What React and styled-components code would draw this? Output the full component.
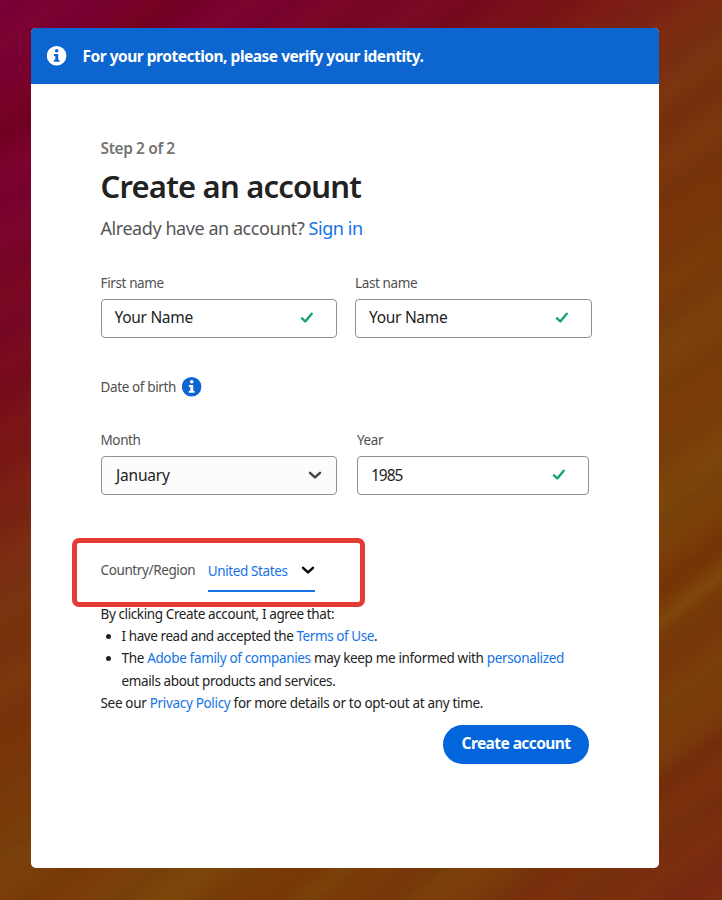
import styled, { createGlobalStyle } from 'styled-components'

export default function App() {
    return <Page>
        <GlobalStyle />
        <Streaks />
        <Card>
            <Banner>
                <InfoIcon fill="#FFFFFF" glyph="#0D66D0" />
                <BannerText>For your protection, please verify your identity.</BannerText>
            </Banner>
            <Content>
                <Step>Step 2 of 2</Step>
                <Title>Create an account</Title>
                <Subtitle>Already have an account? <Link href="#">Sign in</Link></Subtitle>
                <Fields $columns="236.5px 237px" $gap="18px">
                    <TextField label="First name" value="Your Name" spacing="-0.3px" />
                    <TextField label="Last name" value="Your Name" spacing="-0.3px" />
                </Fields>
                <BirthRow>
                    <Label>Date of birth</Label>
                    <InfoIcon fill="#0D66D0" glyph="#FFFFFF" />
                </BirthRow>
                <Fields $columns="236.5px 232px" $gap="20px">
                    <Field>
                        <Label>Month</Label>
                        <Select type="button">January <Chevron color="#444444" /></Select>
                    </Field>
                    <TextField label="Year" value="1985" spacing="-1px" lift="0px" />
                </Fields>
                <CountryRow>
                    <Label>Country/Region</Label>
                    <Country>
                        United States
                        <Chevron color="#000000" />
                    </Country>
                    <Highlight />
                </CountryRow>
                <Terms>
                    <Line $spacing="-0.39px">By clicking Create account, I agree that:</Line>
                    <List>
                        <li><Line $spacing="-0.42px">I have read and accepted the <Link href="#">Terms of Use</Link>.</Line></li>
                        <li>
                            <Line $spacing="-0.34px">The <Link href="#">Adobe family of companies</Link> may keep me informed with <Link href="#">personalized</Link></Line>
                            <Line $spacing="-0.38px">emails about products and services.</Line>
                        </li>
                    </List>
                    <Line $spacing="-0.32px">See our <Link href="#">Privacy Policy</Link> for more details or to opt-out at any time.</Line>
                </Terms>
                <Submit type="button">Create account</Submit>
            </Content>
        </Card>
    </Page>;
}

function TextField({ label, value, spacing, lift = '1px' }) {
    return <Field>
        <Label>{label}</Label>
        <InputBox>
            <Input defaultValue={value} aria-label={label} $spacing={spacing} $lift={lift} />
            <Check />
        </InputBox>
    </Field>;
}

function InfoIcon({ fill, glyph }) {
    return <Icon width="20" height="20" viewBox="0 0 20 20">
        <circle cx="9.6" cy="9.8" r="9.8" fill={fill} />
        <circle cx="9.7" cy="4.8" r="1.8" fill={glyph} />
        <path d="M6.9 8h4.3v5.8h1.3v1.9H6.9v-1.9h1.4V9.9H6.9z" fill={glyph} />
    </Icon>;
}

function Check() {
    return <Icon width="14" height="12" viewBox="0 0 14 12">
        <path d="M2 6.3l3.3 3.2 6.4-7.8" fill="none" stroke="#12A472" strokeWidth="2.4" strokeLinecap="round" strokeLinejoin="round" />
    </Icon>;
}

function Chevron({ color }) {
    return <Icon width="14" height="9" viewBox="0 0 14 9">
        <path d="M2 1.8l5 4.6 5-4.6" fill="none" stroke={color} strokeWidth="2.4" strokeLinecap="round" strokeLinejoin="round" />
    </Icon>;
}

const GlobalStyle = createGlobalStyle`
    * {
        box-sizing: border-box;
    }
    body {
        margin: 0;
        font-family: "Noto Sans", "Open Sans", sans-serif;
    }
`;
const Page = styled.div`
    position: relative;
    width: 722px;
    height: 900px;
    padding: 28px 63px 32px 31px;
    overflow: hidden;
    background: linear-gradient(142deg,
        #7A0036 0px, #78002F 70px, #720020 105px, #7A0030 140px, #78062A 240px,
        #760A1C 300px, #7A1814 370px, #7A2A12 440px, #7A3810 500px, #783208 590px,
        #7A420C 660px, #783A08 740px, #7A450A 810px, #763606 870px, #7A400A 960px,
        #78300C 1050px, #7A2812 1154px);
`;
const Streaks = styled.div`
    position: absolute;
    inset: 0;
    background:
        repeating-linear-gradient(145deg, transparent 0px, #00000008 11px, transparent 19px, #FF800006 37px, transparent 53px),
        linear-gradient(142deg,
            transparent 190px, #76060844 235px, transparent 260px, transparent 480px,
            #70180044 500px, transparent 540px, transparent 625px, #6A200044 650px, transparent 680px,
            transparent 880px, #84560C66 898px, transparent 908px, #74280A66 940px, transparent 965px,
            transparent 1010px, #70200A66 1030px, transparent 1050px);
`;
const Card = styled.div`
    position: relative;
    width: 628px;
    height: 840px;
    border-radius: 5px;
    background: #FFFFFF;
    overflow: hidden;
`;
const Banner = styled.div`
    display: flex;
    align-items: center;
    gap: 16px;
    height: 56px;
    padding: 0 0 1px 15.5px;
    background: #0D66D0;
`;
const BannerText = styled.div`
    padding-top: 1px;
    font-size: 15.5px;
    font-weight: 700;
    letter-spacing: -0.49px;
    color: #FFFFFF;
`;
const Content = styled.div`
    display: flex;
    flex-direction: column;
    padding: 54px 67px 0 69.5px;
`;
const Step = styled.div`
    font-size: 15.5px;
    font-weight: 600;
    line-height: 20px;
    letter-spacing: -0.4px;
    color: #747474;
`;
const Title = styled.h1`
    margin: 8px 0 10px;
    font-size: 31px;
    font-weight: 600;
    line-height: 40px;
    letter-spacing: -0.8px;
    color: #222222;
`;
const Subtitle = styled.div`
    margin-bottom: 33px;
    font-size: 18px;
    line-height: 24px;
    letter-spacing: -0.44px;
    color: #555555;
`;
const Link = styled.a`
    color: #1473E6;
    text-decoration: none;
`;
const Fields = styled.div`
    display: grid;
    grid-template-columns: ${props => props.$columns};
    column-gap: ${props => props.$gap};
`;
const Field = styled.div`
    display: flex;
    flex-direction: column;
    gap: 6px;
`;
const Label = styled.div`
    font-size: 13.5px;
    line-height: 20px;
    letter-spacing: -0.38px;
    color: #505050;
`;
const InputBox = styled.div`
    display: flex;
    align-items: center;
    height: 39px;
    padding: 0 22px 2px 13px;
    border: 1px solid #909090;
    border-radius: 4px;
    background: #FFFFFF;
`;
const Input = styled.input`
    flex: 1;
    min-width: 0;
    padding: 0 0 ${props => props.$lift};
    border: 0;
    outline: 0;
    background: transparent;
    font-family: inherit;
    font-size: 15.5px;
    letter-spacing: ${props => props.$spacing};
    color: #222222;
`;
const Select = styled.button`
    display: flex;
    align-items: center;
    justify-content: space-between;
    height: 39px;
    padding: 0 14px 1px 14.5px;
    border: 1px solid #909090;
    border-radius: 4px;
    background: #FCFCFC;
    font-family: inherit;
    font-size: 15.5px;
    letter-spacing: -0.2px;
    color: #222222;
`;
const Icon = styled.svg`
    flex: none;
    display: block;
`;
const BirthRow = styled.div`
    display: flex;
    align-items: center;
    gap: 6px;
    margin: 39px 0 33px;
`;
const CountryRow = styled.div`
    position: relative;
    display: flex;
    align-items: flex-start;
    gap: 12.5px;
    height: 43px;
    margin-top: 65px;
`;
const Country = styled.div`
    display: flex;
    align-items: center;
    justify-content: space-between;
    width: 107px;
    height: 32px;
    padding-bottom: 9px;
    border-bottom: 2px solid #1473E6;
    font-size: 13.5px;
    letter-spacing: -0.38px;
    white-space: nowrap;
    color: #1473E6;
`;
/* red marker drawn over the country picker */
const Highlight = styled.div`
    position: absolute;
    left: -29px;
    top: -22px;
    width: 293.5px;
    height: 69px;
    border: 5px solid #E53B34;
    border-radius: 7px;
    pointer-events: none;
`;
const Terms = styled.div`
    font-size: 13.5px;
    color: #222222;
`;
const Line = styled.div`
    line-height: 22.2px;
    letter-spacing: ${props => props.$spacing};
    white-space: nowrap;
`;
const List = styled.ul`
    margin: 0;
    padding-left: 21px;
`;
const Submit = styled.button`
    align-self: flex-end;
    width: 146px;
    height: 39px;
    margin: 11px 3px 0 0;
    padding: 0 0 3px;
    border: 0;
    border-radius: 20px;
    background: #0265DC;
    font-family: inherit;
    font-size: 15.5px;
    font-weight: 700;
    letter-spacing: -0.57px;
    color: #FFFFFF;
`;
